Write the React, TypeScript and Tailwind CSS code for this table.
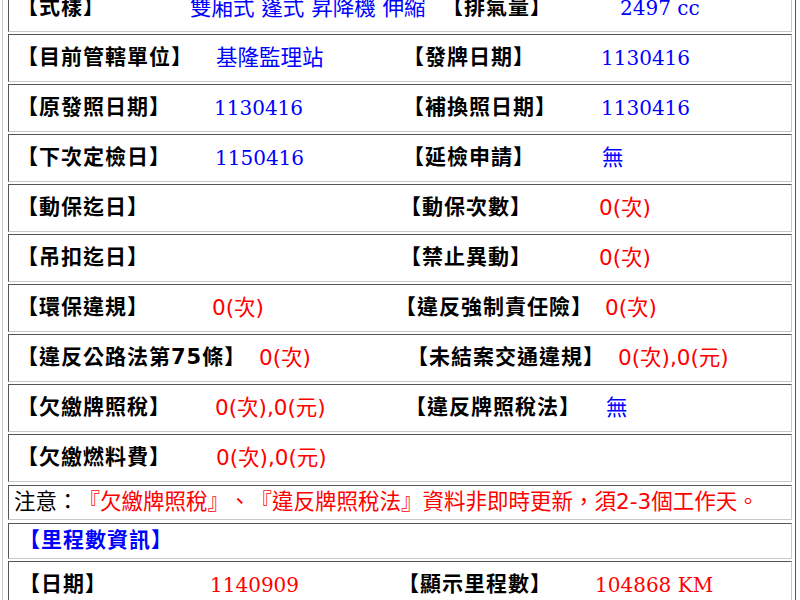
import React from "react";

// cell borders: inset look (dark top/left, light bottom/right)
const cellBorder =
   "border border-t-[#555555] border-l-[#555555] border-b-[#c8c8c8] border-r-[#c8c8c8]";

const cjk = "font-['DejaVu_Sans','Noto_Sans_CJK_TC',sans-serif]";
const serif = "font-['DejaVu_Serif','Noto_Sans_CJK_TC',serif]";

const Label = ({ children, color = "text-black" }: { children: string; color?: string }) => (
   <span className={`${cjk} font-bold text-[21px] tracking-[1px] whitespace-nowrap ${color}`}>【{children}】</span>
);

const Blue = ({ children }: { children: React.ReactNode }) => (
   <span className={`${cjk} text-[21.5px] text-[#0000ff] whitespace-nowrap`}>{children}</span>
);

const BlueNum = ({ children }: { children: React.ReactNode }) => (
   <span className={`${serif} text-[20px] text-[#0000ff] whitespace-nowrap`}>{children}</span>
);

const Red = ({ children }: { children: React.ReactNode }) => (
   <span className={`${cjk} text-[21.5px] text-[#ff0000] whitespace-nowrap`}>{children}</span>
);

const RedNum = ({ children }: { children: React.ReactNode }) => (
   <span className={`${serif} text-[20px] text-[#ff0000] whitespace-nowrap`}>{children}</span>
);

const Row = ({ children, className = "h-[48px] mb-[2px]" }: { children: React.ReactNode; className?: string }) => (
   <div className={`flex items-center pl-[8px] ${cellBorder} ${className}`}>{children}</div>
);

const App = () => {
   return (
      <div className="w-[800px] h-[600px] overflow-hidden bg-white [text-spacing-trim:space-all]">
         <div className="ml-[2px] w-[794px] -mt-[16px] pl-[5px] pr-[3px] border-l border-r border-l-[#c8c8c8] border-r-[#555555]">
            <Row>
               <div className="w-[173px] shrink-0"><Label>式樣</Label></div>
               <div className="w-[252px] shrink-0"><Blue>雙廂式 篷式 昇降機 伸縮</Blue></div>
               <div className="w-[178px] shrink-0"><Label>排氣量</Label></div>
               <div><BlueNum>2497 cc</BlueNum></div>
            </Row>
            <Row>
               <div className="w-[199px] shrink-0"><Label>目前管轄單位</Label></div>
               <div className="w-[187px] shrink-0"><Blue>基隆監理站</Blue></div>
               <div className="w-[198px] shrink-0"><Label>發牌日期</Label></div>
               <div><BlueNum>1130416</BlueNum></div>
            </Row>
            <Row>
               <div className="w-[197px] shrink-0"><Label>原發照日期</Label></div>
               <div className="w-[189px] shrink-0"><BlueNum>1130416</BlueNum></div>
               <div className="w-[198px] shrink-0"><Label>補換照日期</Label></div>
               <div><BlueNum>1130416</BlueNum></div>
            </Row>
            <Row>
               <div className="w-[198px] shrink-0"><Label>下次定檢日</Label></div>
               <div className="w-[188px] shrink-0"><BlueNum>1150416</BlueNum></div>
               <div className="w-[199px] shrink-0"><Label>延檢申請</Label></div>
               <div><Blue>無</Blue></div>
            </Row>
            <Row>
               <div className="w-[383px] shrink-0"><Label>動保迄日</Label></div>
               <div className="w-[199px] shrink-0"><Label>動保次數</Label></div>
               <div><Red>0(次)</Red></div>
            </Row>
            <Row>
               <div className="w-[383px] shrink-0"><Label>吊扣迄日</Label></div>
               <div className="w-[199px] shrink-0"><Label>禁止異動</Label></div>
               <div><Red>0(次)</Red></div>
            </Row>
            <Row>
               <div className="w-[195px] shrink-0"><Label>環保違規</Label></div>
               <div className="w-[183px] shrink-0"><Red>0(次)</Red></div>
               <div className="w-[210px] shrink-0"><Label>違反強制責任險</Label></div>
               <div><Red>0(次)</Red></div>
            </Row>
            <Row>
               <div className="w-[242px] shrink-0"><Label>違反公路法第75條</Label></div>
               <div className="w-[148px] shrink-0"><Red>0(次)</Red></div>
               <div className="w-[211px] shrink-0"><Label>未結案交通違規</Label></div>
               <div><Red>0(次),0(元)</Red></div>
            </Row>
            <Row>
               <div className="w-[198px] shrink-0"><Label>欠繳牌照稅</Label></div>
               <div className="w-[190px] shrink-0"><Red>0(次),0(元)</Red></div>
               <div className="w-[201px] shrink-0"><Label>違反牌照稅法</Label></div>
               <div><Blue>無</Blue></div>
            </Row>
            <Row className="h-[48px] mb-[3px]">
               <div className="w-[199px] shrink-0"><Label>欠繳燃料費</Label></div>
               <div><Red>0(次),0(元)</Red></div>
            </Row>
            <div className={`flex items-center h-[35px] mb-[3px] pl-[5px] ${cellBorder}`}>
               <span className={`${cjk} text-[21.5px] whitespace-nowrap`}>
                  <span className="text-black">注意：</span>
                  <span className="text-[#ff0000]">『欠繳牌照稅』、『違反牌照稅法』資料非即時更新，須2-3個工作天。</span>
               </span>
            </div>
            <Row className="h-[36px] mb-[2px]">
               <div className="pl-[2px]"><Label color="text-[#0000ff]">里程數資訊</Label></div>
            </Row>
            <Row>
               <div className="w-[193px] shrink-0 pl-[2px]"><Label>日期</Label></div>
               <div className="w-[188px] shrink-0"><RedNum>1140909</RedNum></div>
               <div className="w-[197px] shrink-0"><Label>顯示里程數</Label></div>
               <div><RedNum>104868 KM</RedNum></div>
            </Row>
         </div>
      </div>
   );
};

export default App;
